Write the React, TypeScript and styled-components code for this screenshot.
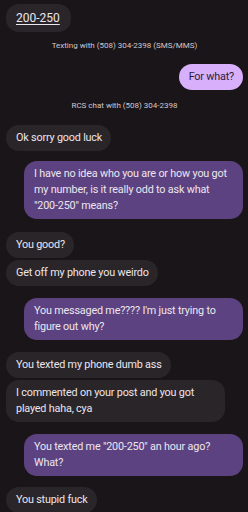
import React from "react";
import styled, { createGlobalStyle } from "styled-components";

const Global = createGlobalStyle`
  html, body { margin: 0; padding: 0; background: #1a1519; overflow: hidden; }
  body { font-family: Roboto, "Noto Sans", sans-serif; }
`;

const Screen = styled.div`
  width: 248px;
  height: 512px;
  background: #1a1519;
  display: flex;
  flex-direction: column;
  padding: 4px 5px 0 6px;
  box-sizing: border-box;
  overflow: hidden;
`;

const Row = styled.div<{ $out?: boolean; $gap: number }>`
  display: flex;
  justify-content: ${(p) => (p.$out ? "flex-end" : "flex-start")};
  margin-top: ${(p) => p.$gap}px;
`;

const Bubble = styled.div<{ $out?: boolean; $light?: boolean }>`
  max-width: 200px;
  padding: 5px 9px 5px 10px;
  border-radius: 13px;
  font-size: 10.8px;
  line-height: 16px;
  letter-spacing: -0.18px;
  background: ${(p) => (p.$light ? "#d7affa" : p.$out ? "#5c4280" : "#2a2529")};
  color: ${(p) => (p.$light ? "#2a1a38" : "#ece6ee")};
`;

const LinkBubble = styled(Bubble)`
  padding: 6px 11px 6px 10px;
  font-size: 12px;
  letter-spacing: 0;
`;

const Link = styled.span`
  text-decoration: underline;
  text-underline-offset: 2px;
`;

const Info = styled.div<{ $gap: number }>`
  margin-top: ${(p) => p.$gap}px;
  text-align: center;
  font-size: 8px;
  line-height: 10px;
  color: #cfc8cf;
`;

const Footer = styled.div`
  margin-top: 1px;
  display: flex;
  align-items: flex-start;
  height: 10px;
  gap: 3px;
`;

const Redact = styled.div<{ $w: number }>`
  width: ${(p) => p.$w}px;
  height: 10px;
  background: #000;
`;

const FooterText = styled.div`
  font-size: 8px;
  line-height: 10px;
  color: #fff;
  padding-top: 2px;
`;

type Msg =
  | { kind: "in" | "out" | "light"; text: React.ReactNode; gap: number }
  | { kind: "info"; text: string; gap: number };

const msgs: Msg[] = [
  { kind: "info", text: "Texting with (508) 304-2398 (SMS/MMS)", gap: 9 },
  { kind: "light", text: "For what?", gap: 13 },
  { kind: "info", text: "RCS chat with (508) 304-2398", gap: 11 },
  { kind: "in", text: "Ok sorry good luck", gap: 14 },
  {
    kind: "out",
    text: 'I have no idea who you are or how you got my number, is it really odd to ask what "200-250" means?',
    gap: 10,
  },
  { kind: "in", text: "You good?", gap: 13 },
  { kind: "in", text: "Get off my phone you weirdo", gap: 2 },
  { kind: "out", text: "You messaged me???? I'm just trying to figure out why?", gap: 12 },
  { kind: "in", text: "You texted my phone dumb ass", gap: 12 },
  { kind: "in", text: "I commented on your post and you got played haha, cya", gap: 2 },
  { kind: "out", text: 'You texted me "200-250" an hour ago? What?', gap: 12 },
  { kind: "in", text: "You stupid fuck", gap: 11 },
];

export default function App() {
  return (
    <>
      <Global />
      <Screen>
        <Row $gap={0}>
          <LinkBubble>
            <Link>200-250</Link>
          </LinkBubble>
        </Row>
        {msgs.map((m, i) =>
          m.kind === "info" ? (
            <Info key={i} $gap={m.gap}>
              {m.text}
            </Info>
          ) : (
            <Row key={i} $out={m.kind !== "in"} $gap={m.gap}>
              <Bubble $out={m.kind === "out"} $light={m.kind === "light"}>
                {m.text}
              </Bubble>
            </Row>
          )
        )}
        <Footer>
          <Redact $w={63} />
          <FooterText>i:lll:ll 'lll lll lll</FooterText>
          <Redact $w={48} />
        </Footer>
      </Screen>
    </>
  );
}
